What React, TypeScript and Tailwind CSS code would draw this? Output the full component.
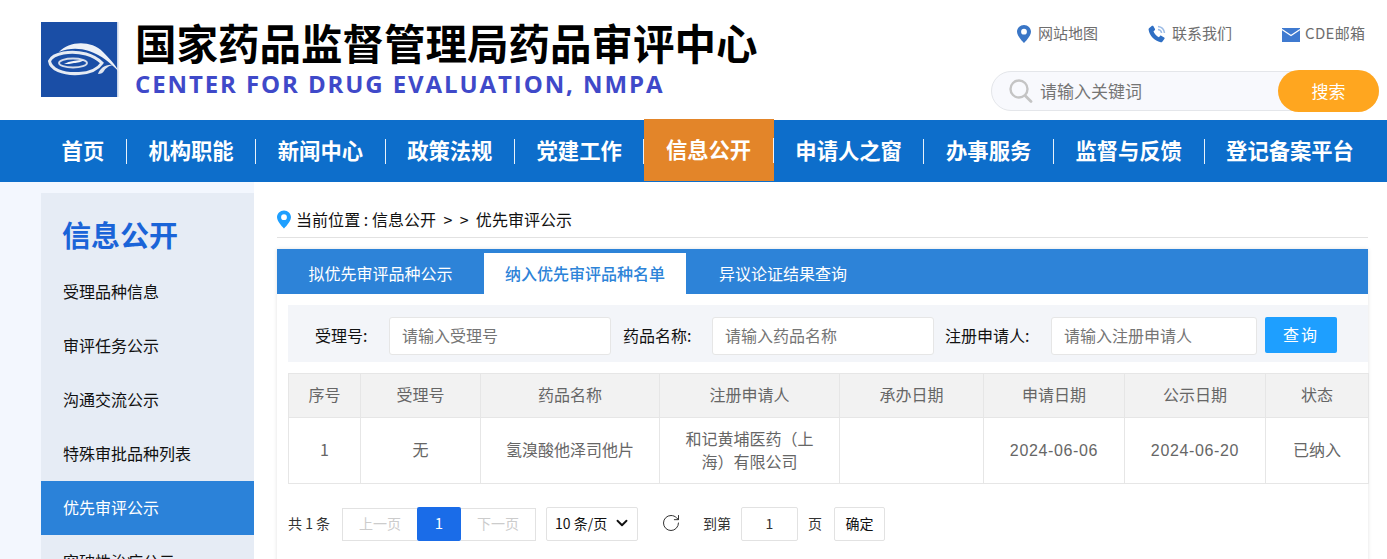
import { ChevronDown, RotateCw } from "lucide-react";

const NAV = ["首页", "机构职能", "新闻中心", "政策法规", "党建工作", "信息公开", "申请人之窗", "办事服务", "监督与反馈", "登记备案平台"];
const SIDE = ["受理品种信息", "审评任务公示", "沟通交流公示", "特殊审批品种列表", "优先审评公示", "突破性治疗公示"];
const COLS = [
  { name: "序号", w: "w-[72px]" },
  { name: "受理号", w: "w-[120px]" },
  { name: "药品名称", w: "w-[179px]" },
  { name: "注册申请人", w: "w-[180px]" },
  { name: "承办日期", w: "w-[144px]" },
  { name: "申请日期", w: "w-[141px]" },
  { name: "公示日期", w: "w-[141px]" },
  { name: "状态", w: "w-[103px]" },
];
const ROW = ["1", "无", "氢溴酸他泽司他片", "和记黄埔医药（上海）有限公司", "", "2024-06-06", "2024-06-20", "已纳入"];

function Logo() {
  return (
    <svg width="80" height="75" viewBox="0 0 80 75" className="shrink-0 -mr-[2px]">
      <rect width="76" height="75" fill="#1a4ea6" />
      <rect x="76" width="1.500" height="75" fill="#c9d6ea" />
      <path d="M18 30C28 19 50 18 62 30 68 36 73 41 79 51 70 41 60 33 48 29 38 26 28 26 18 30Z" fill="#eef2f8" />
      <path d="M8.500 39C12 31 30 28 45 32 52 34 58 38 61 41 57 47 50 51 38 51.500 21 52.500 9.500 47 8.500 39Z" fill="none" stroke="#e6ebf3" strokeWidth="3" />
      <ellipse cx="32" cy="41" rx="14" ry="4.500" fill="none" stroke="#d5dcea" strokeWidth="1.800" />
      <path d="M23 42C29 39 35 38 43 38 41 40 36 41 33 41 30 42 26 42 23 42Z" fill="#f4f6fa" />
      <path d="M57 52C59 46 65 42 72 43 67 44 64 47 63 49 62 51 60 52 57 52Z" fill="#dfe5f0" />
    </svg>
  );
}

function PinIcon({ className, fill }: { className?: string; fill: string }) {
  return (
    <svg viewBox="0 0 14 18" className={className}>
      <path d="M7 0C3.1 0 0 3 0 6.800 0 11.500 7 18 7 18s7-6.500 7-11.200C14 3 10.900 0 7 0Zm0 9.600A2.900 2.900 0 1 1 7 3.800a2.900 2.900 0 0 1 0 5.800Z" fill={fill} />
    </svg>
  );
}

function PhoneIcon() {
  return (
    <svg viewBox="0 0 18 18" className="w-[18px] h-[18px]">
      <path d="M1 3.200 4 .8c.5-.3 1-.2 1.300.3l1.700 3c.2.400.1.800-.2 1.100L5.500 6.300c.6 2.400 3.200 5.200 5.400 5.900l1.100-1.300c.3-.3.800-.4 1.200-.2l3 1.700c.5.300.6.900.3 1.300l-2.200 3c-.4.500-1 .7-1.600.5C6.500 16 1.500 10.500.6 4.700.5 4.100.6 3.600 1 3.200Z" fill="#2f6fc4" />
      <path d="M10 1.500c3.500.3 6 2.800 6.500 6.500M10 4.500c2 .2 3.300 1.500 3.600 3.500" stroke="#9dbce6" strokeWidth="1.500" fill="none" />
    </svg>
  );
}

function MailIcon() {
  return (
    <svg viewBox="0 0 18 14" className="w-[18px] h-[14px] mt-[3px]">
      <path d="M0 0h18v14H0Z" fill="#3f7ad0" />
      <path d="M0 1.500 9 7.500 18 1.500" stroke="#fff" strokeWidth="1.200" fill="none" />
    </svg>
  );
}

function SearchIcon() {
  return (
    <svg viewBox="0 0 24 24" className="w-[24px] h-[24px]">
      <circle cx="10" cy="10" r="8.500" fill="none" stroke="#c4c4c4" strokeWidth="2.400" />
      <path d="M16.500 17 22 22.500" stroke="#c4c4c4" strokeWidth="2.800" strokeLinecap="round" />
    </svg>
  );
}

function Header() {
  return (
    <header className="h-[120px] bg-white flex justify-between pl-[41px] pr-[8px]">
      <div className="flex pt-[22px] gap-[16px] items-start">
        <Logo />
        <div>
          <h1 className="text-[41.500px] leading-[40px] font-bold text-black whitespace-nowrap">国家药品监督管理局药品审评中心</h1>
          <div className="mt-[10px] text-[24px] leading-[24px] font-bold tracking-[1.900px] text-[#3f49c9] whitespace-nowrap font-['Open_Sans']">CENTER FOR DRUG EVALUATION, NMPA</div>
        </div>
      </div>
      <div className="w-[388px] flex flex-col pt-[23px]">
        <div className="flex h-[21px] items-center text-[15px] text-[#6e6e6e] pl-[26px] gap-[50px] whitespace-nowrap">
          <span className="flex items-center gap-[7px]"><PinIcon className="w-[14px] h-[18px]" fill="#3a76c6" />网站地图</span>
          <span className="flex items-center gap-[6px]"><PhoneIcon />联系我们</span>
          <span className="flex items-center gap-[5px]"><MailIcon /><span className="tracking-[0.300px]">CDE邮箱</span></span>
        </div>
        <div className="mt-[27px] h-[40px] rounded-full border border-[#e4e6ea] bg-[#f8f9fd] flex items-center pl-[17px]">
          <SearchIcon />
          <span className="ml-[7px] text-[17px] text-[#757575]">请输入关键词</span>
          <button className="ml-auto -mr-px h-[42px] w-[101px] rounded-full bg-[#ffa61f] text-white text-[17px]">搜索</button>
        </div>
      </div>
    </header>
  );
}

function Nav() {
  return (
    <nav className="h-[62px] bg-[#0d6ecb] flex items-center pl-[40px]">
      {NAV.map((n, i) => {
        const active = n === "信息公开";
        const last = i === NAV.length - 1;
        return (
          <div key={n} className={"flex items-center self-stretch " + (active ? "bg-[#e38529] -translate-y-px" : "")}>
            <span className={"px-[21.600px] text-[21.300px] font-bold text-white whitespace-nowrap leading-[25px] h-[25px] " + (last ? "" : "border-r border-white/90")}>
              <span className="block -translate-y-[2px]">{n}</span>
            </span>
          </div>
        );
      })}
    </nav>
  );
}

function Sidebar() {
  return (
    <aside className="w-[213px] shrink-0 bg-[#e6ecf5] mt-[11px]">
      <h2 className="pl-[21px] pt-[21px] h-[72px] text-[29px] leading-[40px] font-bold text-[#1a64d8]">信息公开</h2>
      <ul>
        {SIDE.map((s) => (
          <li key={s} className={"h-[54px] leading-[52px] pl-[22px] text-[16px] " + (s === "优先审评公示" ? "bg-[#2b82d9] text-white" : "text-[#111]")}>{s}</li>
        ))}
      </ul>
    </aside>
  );
}

function Field({ label, placeholder, labelW, inputW, gap }: { label: string; placeholder: string; labelW: string; inputW: string; gap: string }) {
  return (
    <>
      <label className={"text-[16px] leading-[36px] text-[#111] whitespace-nowrap " + labelW}>{label}</label>
      <input placeholder={placeholder} className={"h-[38px] bg-white border border-[#e6e6e6] rounded-[3px] pl-[12px] pr-[12px] pb-[2px] text-[16px] outline-none placeholder:text-[#757575] " + inputW + " " + gap} />
    </>
  );
}

function Filters() {
  return (
    <div className="h-[57px] mt-[11px] pt-[12px] bg-[#f3f5f9] flex items-start">
      <Field label="受理号:" placeholder="请输入受理号" labelW="ml-[27px] w-[74px]" inputW="w-[222px]" gap="mr-[12px]" />
      <Field label="药品名称:" placeholder="请输入药品名称" labelW="w-[89px]" inputW="w-[222px]" gap="mr-[11px]" />
      <Field label="注册申请人:" placeholder="请输入注册申请人" labelW="w-[106px]" inputW="w-[206px]" gap="mr-[8px]" />
      <button className="w-[72px] h-[36px] pb-[2px] bg-[#1e9fff] text-white text-[16px] tracking-[2px] rounded-[2px]">查询</button>
    </div>
  );
}

function ResultTable() {
  return (
    <table className="mt-[11px] w-[1080px] table-fixed border-collapse text-[16px] text-[#666] text-center">
      <thead>
        <tr className="h-[44px] bg-[#f2f2f2]">
          {COLS.map((c) => (
            <th key={c.name} className={"font-normal border border-[#e6e6e6] pb-[3px] " + c.w}>{c.name}</th>
          ))}
        </tr>
      </thead>
      <tbody>
        <tr className="h-[66px]">
          {ROW.map((v, i) => (
            <td key={i} className={"border border-[#e6e6e6] px-[22px] leading-[23px] " + (v.startsWith("2024") ? "font-['Liberation_Sans'] tracking-[0.650px]" : "pb-[2px]")}>{v}</td>
          ))}
        </tr>
      </tbody>
    </table>
  );
}

function Pagination() {
  return (
    <div className="mt-[23px] flex items-center text-[14px] text-[#333]">
      <span className="w-[54px] pb-[2px] whitespace-nowrap">共 1 条</span>
      <span className="w-[75px] h-[33px] pb-[2px] flex items-center justify-center border border-[#e2e2e2] border-r-0 text-[#ccc]">上一页</span>
      <span className="w-[44px] h-[34px] pb-[2px] flex items-center justify-center bg-[#1a6ce8] text-white text-[15px] rounded-[2px]">1</span>
      <span className="w-[75px] h-[33px] pb-[2px] flex items-center justify-center border border-[#e2e2e2] border-l-0 text-[#ccc]">下一页</span>
      <span className="ml-[10px] w-[92px] h-[34px] pb-[2px] flex items-center justify-between pl-[8px] pr-[6px] border border-[#e2e2e2] rounded-[2px] text-[14px] text-[#111]">10 条/页<ChevronDown size={18} strokeWidth={2.500} /></span>
      <RotateCw size={20} strokeWidth={1.200} className="ml-[23px] -mt-[2px] text-[#333]" />
      <span className="ml-[22px] pb-[2px]">到第</span>
      <span className="ml-[10px] w-[57px] h-[34px] pb-[2px] flex items-center justify-center border border-[#e2e2e2] rounded-[2px]">1</span>
      <span className="ml-[10px] pb-[2px]">页</span>
      <span className="ml-[12px] w-[51px] h-[34px] pb-[1px] flex items-center justify-center border border-[#e2e2e2] rounded-[2px] text-[#111]">确定</span>
    </div>
  );
}

function Panel() {
  return (
    <div className="mt-[11px] w-[1091px] shadow-[0_0_4px_rgba(0,0,0,0.12)]">
      <div className="h-[45px] bg-[#2d83d8] flex items-end text-[16px] text-white">
        <span className="w-[207px] h-[41px] leading-[41px] text-center">拟优先审评品种公示</span>
        <span className="w-[202px] h-[41px] leading-[41px] text-center bg-white text-[#2d83d8] font-medium">纳入优先审评品种名单</span>
        <span className="w-[194px] h-[41px] leading-[41px] text-center">异议论证结果查询</span>
      </div>
      <div className="pl-[11px] h-[300px] bg-white">
        <Filters />
        <ResultTable />
        <Pagination />
      </div>
    </div>
  );
}

export default function App() {
  return (
    <div className="h-screen overflow-hidden bg-[#f3f7fe] font-['Noto_Sans_CJK_SC','Liberation_Sans',sans-serif]">
      <Header />
      <Nav />
      <div className="flex pl-[41px]">
        <Sidebar />
        <main className="flex-1 bg-white pl-[23px] pr-[20px] h-[400px]">
          <div className="h-[56px] pt-[25px] border-b border-[#e2e2e2] flex items-start gap-[5px] text-[16px] leading-[24px] text-[#111] whitespace-pre">
            <PinIcon className="w-[14px] h-[19px] mt-[3px]" fill="#1e9fff" />
            <span className="tracking-[0.050px]">当前位置 : 信息公开  &gt;  &gt;  优先审评公示</span>
          </div>
          <Panel />
        </main>
      </div>
    </div>
  );
}
